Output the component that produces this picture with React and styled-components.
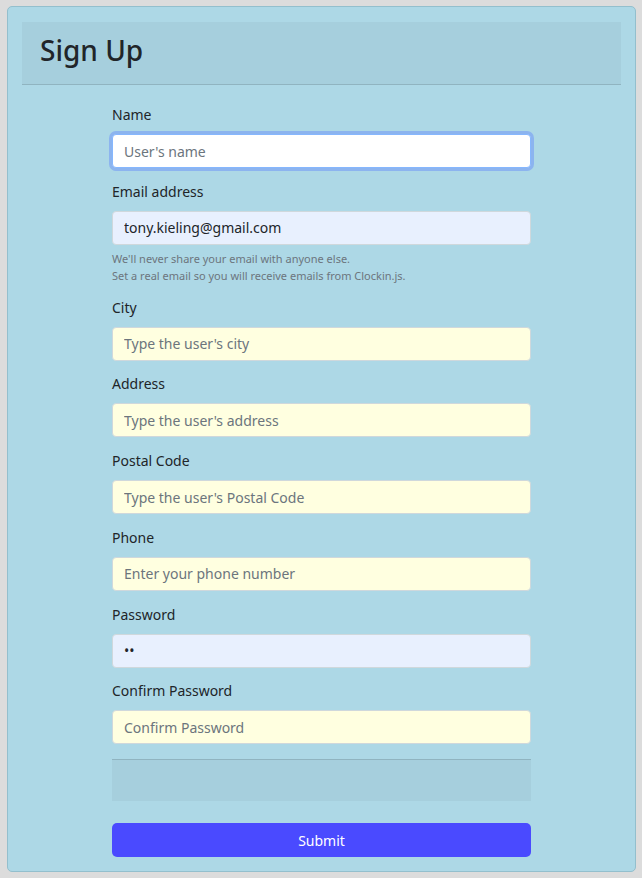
import React, { useState } from 'react';
import styled, { createGlobalStyle } from 'styled-components';

const GlobalStyle = createGlobalStyle`
    html, body {
        margin: 0;
        padding: 0;
        background: #dcdcdc;
        font-family: "Noto Sans", "DejaVu Sans", sans-serif;
        color: #212529;
    }
`

const Page = styled.div`
    padding: 6px 6px 7px 7px;
`

const Card = styled.div`
    background: lightblue;
    border: 1px solid #93bfcd;
    border-radius: 5px;
    padding: 15px 14px 14px 14px;
`

const Header = styled.div`
    background: rgba(0, 0, 0, 0.04);
    border-bottom: 1px solid rgba(0, 0, 0, 0.13);
    height: 63px;
    box-sizing: border-box;
    padding: 0 18px 7px 18px;
    display: flex;
    align-items: center;
`

const Title = styled.h1`
    margin: 0;
    font-size: 28px;
    font-weight: 500;
    color: #212529;
`

const Form = styled.form`
    width: 419px;
    margin: 0 auto;
    padding-top: 17px;
    display: flex;
    flex-direction: column;
`

const Group = styled.div`
    margin-bottom: 10.75px;
`

const Label = styled.label`
    display: block;
    font-size: 14px;
    line-height: 22px;
    padding-top: 2px;
    margin-bottom: 8px;
`

const Input = styled.input`
    box-sizing: border-box;
    width: 100%;
    height: 34px;
    padding: 0 11px;
    font-family: inherit;
    font-size: 14px;
    color: #212529;
    background: ${p => p.$tone === 'auto' ? '#e8f0fe' : p.$tone === 'focus' ? '#fff' : '#ffffe0'};
    border: 1px solid ${p => p.$tone === 'focus' ? '#86b7fe' : '#cfd8dc'};
    border-radius: 4px;
    outline: none;
    box-shadow: ${p => p.$tone === 'focus' ? '0 0 0 3px #8cb4ef' : 'none'};

    &::placeholder {
        color: #6c757d;
    }
`

const Help = styled.div`
    margin-top: 5px;
    font-size: 11px;
    line-height: 17px;
    color: #6c757d;
`

const Footer = styled.div`
    margin-top: 4px;
    height: 41px;
    background: rgba(0, 0, 0, 0.04);
    border-top: 1px solid rgba(0, 0, 0, 0.13);
`

const Button = styled.button`
    margin-top: 22px;
    height: 34px;
    border: none;
    border-radius: 5px;
    background: #4a4aff;
    color: #fff;
    font-family: inherit;
    font-size: 14px;
    cursor: pointer;
`

const fields = [
    { label: 'City', placeholder: "Type the user's city" },
    { label: 'Address', placeholder: "Type the user's address" },
    { label: 'Postal Code', placeholder: "Type the user's Postal Code" },
    { label: 'Phone', placeholder: 'Enter your phone number' },
]

const App = () => {
    const [email, setEmail] = useState('tony.kieling@gmail.com')
    const [password, setPassword] = useState('12')

    return (
        <Page>
            <GlobalStyle />
            <Card>
                <Header>
                    <Title>Sign Up</Title>
                </Header>
                <Form onSubmit={e => e.preventDefault()}>
                    <Group>
                        <Label>Name</Label>
                        <Input $tone='focus' type='text' placeholder="User's name" />
                    </Group>
                    <Group>
                        <Label>Email address</Label>
                        <Input $tone='auto' type='email' value={email} onChange={e => setEmail(e.target.value)} />
                        <Help>
                            We'll never share your email with anyone else.<br />
                            Set a real email so you will receive emails from Clockin.js.
                        </Help>
                    </Group>
                    {fields.map(f => (
                        <Group key={f.label}>
                            <Label>{f.label}</Label>
                            <Input type='text' placeholder={f.placeholder} />
                        </Group>
                    ))}
                    <Group>
                        <Label>Password</Label>
                        <Input $tone='auto' type='password' value={password} onChange={e => setPassword(e.target.value)} />
                    </Group>
                    <Group>
                        <Label>Confirm Password</Label>
                        <Input type='password' placeholder='Confirm Password' />
                    </Group>
                    <Footer />
                    <Button type='submit'>Submit</Button>
                </Form>
            </Card>
        </Page>
    )
}

export default App
